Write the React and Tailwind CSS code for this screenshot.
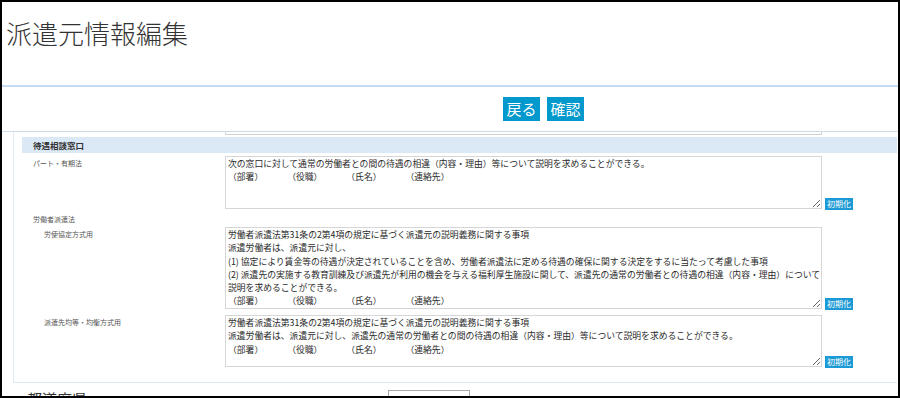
import React from 'react';

const contact = '（部署）　　　 （役職）　　　 （氏名）　　　 （連絡先）';

const texts = {
  part: '次の窓口に対して通常の労働者との間の待遇の相違（内容・理由）等について説明を求めることができる。\n' + contact,
  kyotei:
    '労働者派遣法第31条の2第4項の規定に基づく派遣元の説明義務に関する事項\n' +
    '派遣労働者は、派遣元に対し、\n' +
    '(1) 協定により賃金等の待遇が決定されていることを含め、労働者派遣法に定める待遇の確保に関する決定をするに当たって考慮した事項\n' +
    '(2) 派遣先の実施する教育訓練及び派遣先が利用の機会を与える福利厚生施設に関して、派遣先の通常の労働者との待遇の相違（内容・理由）について\n' +
    '説明を求めることができる。\n' +
    contact,
  kinto:
    '労働者派遣法第31条の2第4項の規定に基づく派遣元の説明義務に関する事項\n' +
    '派遣労働者は、派遣元に対し、派遣先の通常の労働者との間の待遇の相違（内容・理由）等について説明を求めることができる。\n' +
    contact,
};

const FieldRow = ({ label, indent, value, height, className }) => (
  <div className={`flex ${className}`}>
    <div className={`w-[203px] shrink-0 pt-[2px] text-[7px] leading-[10px] text-[#555] ${indent ? 'pl-[22px]' : 'pl-[11px]'}`}>
      {label}
    </div>
    <div className="flex items-end">
      <textarea
        readOnly
        wrap="off"
        defaultValue={value}
        className={`w-[597px] ${height} border border-[#d6d6d6] bg-white px-[2px] pt-[0px] text-[8.8px] leading-[13.3px] text-[#2a2a2a] overflow-hidden outline-none`}
      />
      <button className="ml-[3px] mb-[-1px] w-[28px] h-[12px] bg-[#1b9ad5] text-white text-[8px] leading-[12px] text-center">
        初期化
      </button>
    </div>
  </div>
);

export default function App() {
  return (
    <div className="w-[900px] h-[398px] border-2 border-black bg-white overflow-hidden font-['Noto_Sans_CJK_JP',sans-serif] text-[#333]">
      {/* Page title */}
      <div className="h-[83px] pl-[4px] pt-[17px]">
        <h1 className="text-[26px] leading-[28px] font-light text-[#333]">派遣元情報編集</h1>
      </div>
      <div className="h-[2px] bg-[#c2dbf3]" />

      {/* Actions */}
      <div className="h-[44px] pt-[10px] pl-[501px] flex gap-[7px]">
        <button className="w-[37px] h-[24px] bg-[#0399cc] text-white text-[15px] leading-[24px] text-center">戻る</button>
        <button className="w-[37px] h-[24px] bg-[#0399cc] text-white text-[15px] leading-[24px] text-center">確認</button>
      </div>
      <div className="h-px bg-[#cadcec]" />

      {/* Scrolled form panel */}
      <div className="ml-[11px] w-[884px] border-l border-b border-[#dfeaf5] pl-[8px] pb-[15px]">
        <div className="ml-[203px] w-[597px] h-[3px] border-x border-b border-[#d0d0d0]" />

        <div className="mt-[2px] h-[16px] bg-[#dbe9f7] pl-[11px] text-[8.5px] leading-[16px] font-bold text-[#333]">
          待遇相談窓口
        </div>

        <FieldRow className="mt-[3px]" label="パート・有期法" value={texts.part} height="h-[53px]" />

        <div className="mt-[4px] pl-[11px] text-[7px] leading-[12px] text-[#555]">労働者派遣法</div>

        <FieldRow className="mt-[2px]" indent label="労使協定方式用" value={texts.kyotei} height="h-[82px]" />

        <FieldRow className="mt-[6px]" indent label="派遣先均等・均衡方式用" value={texts.kinto} height="h-[52px]" />
      </div>

      {/* Next section, cut off */}
      <div className="mt-[7px] flex">
        <div className="pl-[25px] w-[386px] text-[15px] leading-[18px] text-[#333]">都道府県</div>
        <div className="w-[82px] h-[20px] border border-[#aaa] bg-white" />
      </div>
    </div>
  );
}
